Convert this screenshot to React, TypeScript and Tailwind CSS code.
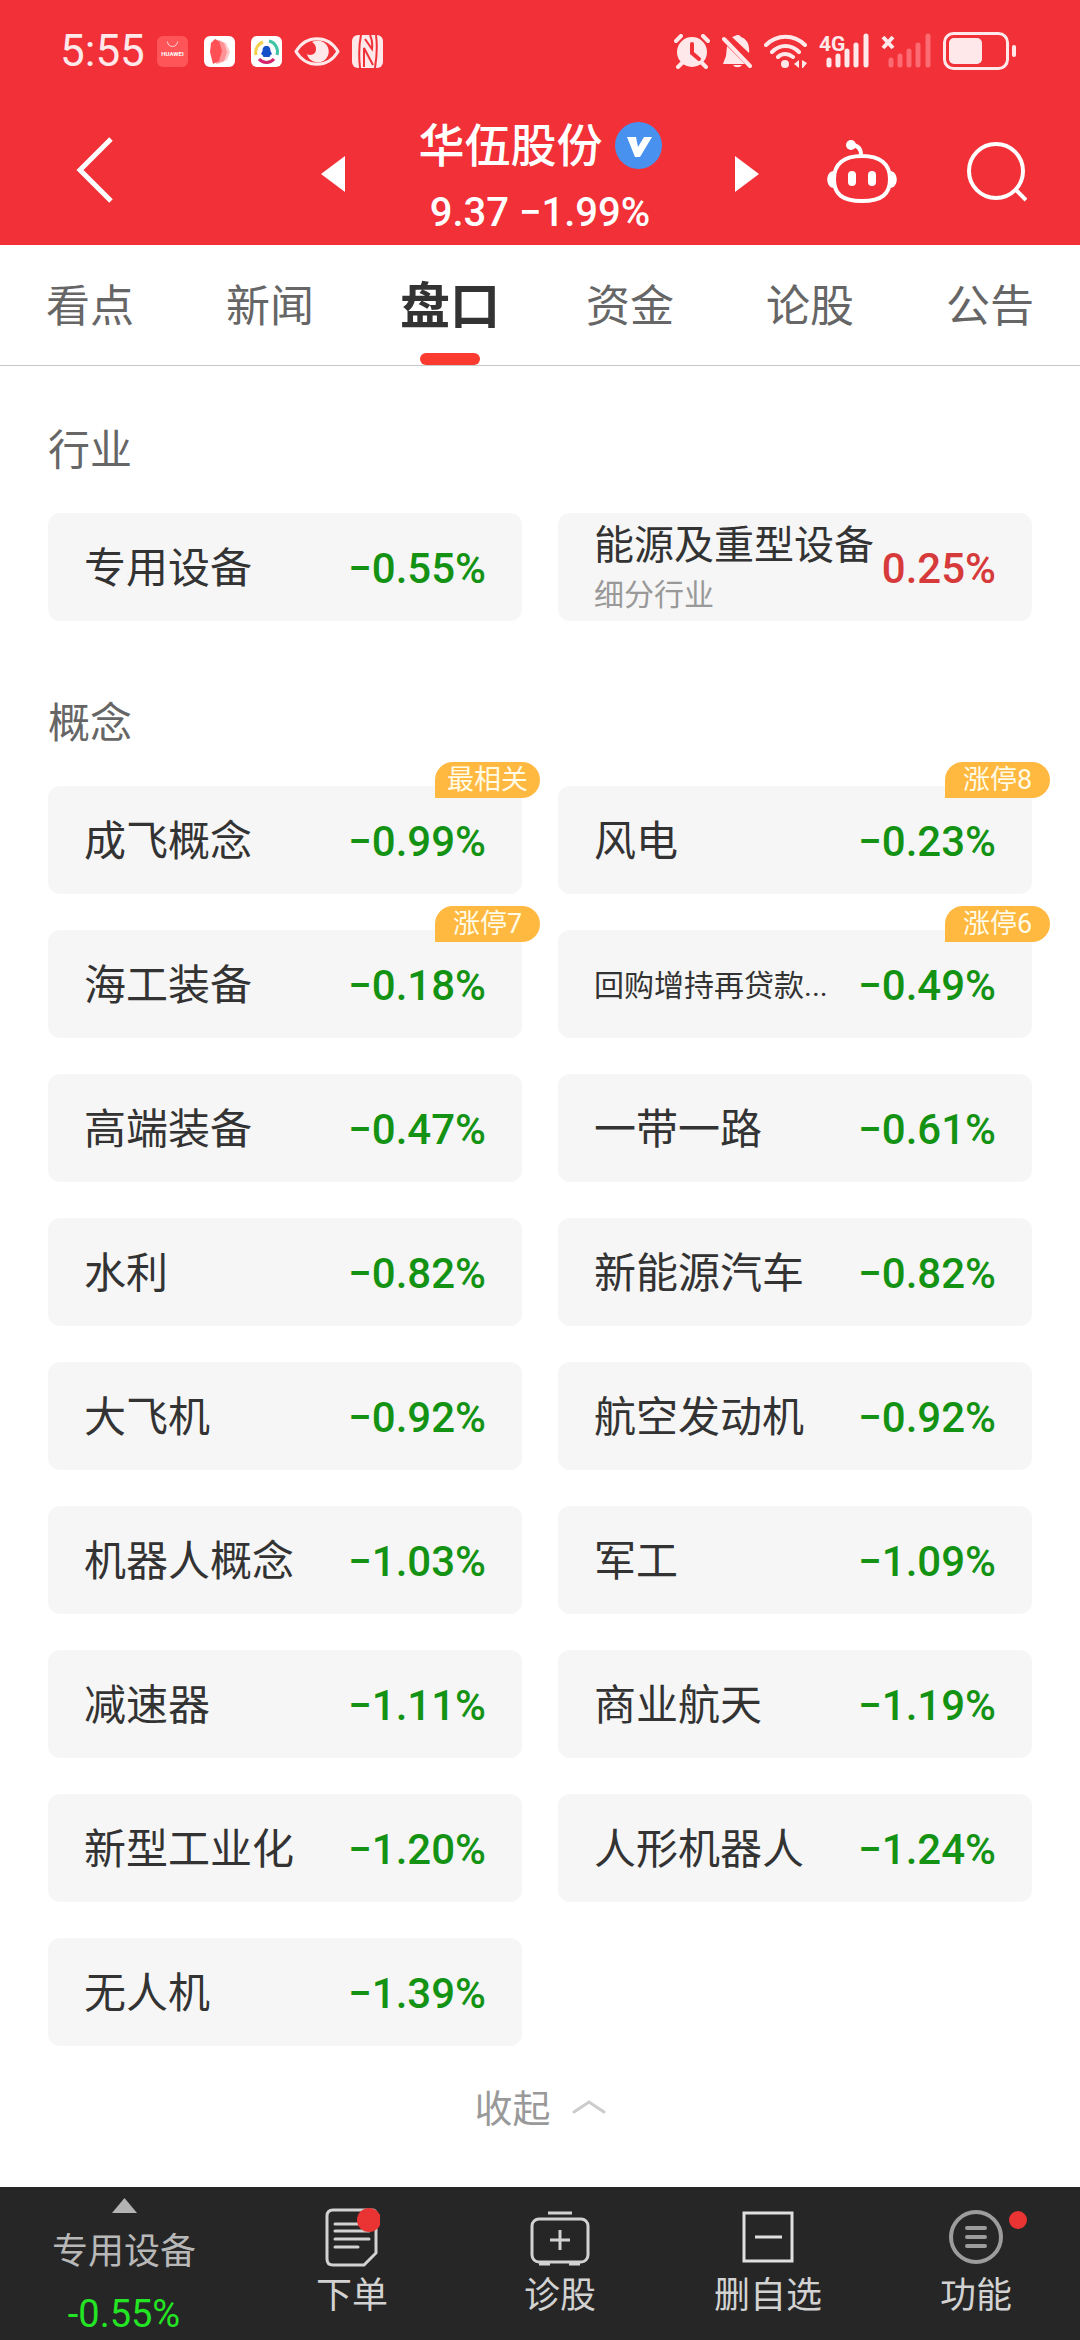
import React, { useState } from 'react';

interface Board {
  name: string;
  change: string;
  tag?: string;
  sub?: string;
  size?: 'md' | 'sm';
}

const tabs = ['看点', '新闻', '盘口', '资金', '论股', '公告'];

const industries: Board[] = [
  { name: '专用设备', change: '−0.55%' },
  { name: '能源及重型设备', change: '0.25%', sub: '细分行业', size: 'md' },
];

const concepts: Board[] = [
  { name: '成飞概念', change: '−0.99%', tag: '最相关' },
  { name: '风电', change: '−0.23%', tag: '涨停8' },
  { name: '海工装备', change: '−0.18%', tag: '涨停7' },
  { name: '回购增持再贷款...', change: '−0.49%', tag: '涨停6', size: 'sm' },
  { name: '高端装备', change: '−0.47%' },
  { name: '一带一路', change: '−0.61%' },
  { name: '水利', change: '−0.82%' },
  { name: '新能源汽车', change: '−0.82%' },
  { name: '大飞机', change: '−0.92%' },
  { name: '航空发动机', change: '−0.92%' },
  { name: '机器人概念', change: '−1.03%' },
  { name: '军工', change: '−1.09%' },
  { name: '减速器', change: '−1.11%' },
  { name: '商业航天', change: '−1.19%' },
  { name: '新型工业化', change: '−1.20%' },
  { name: '人形机器人', change: '−1.24%' },
  { name: '无人机', change: '−1.39%' },
];

const StatusBar: React.FC = () => (
  <div className="flex h-[102px] items-center justify-between pl-[60px] pr-[64px] text-[#ffe8e9]">
    <div className="flex items-center">
      <span className="mr-3 text-[44px] leading-[52px]">5:55</span>
      <svg className="mr-4 size-[31px]" viewBox="0 0 31 31">
        <rect width="31" height="31" rx="6" fill="#ff5458" />
        <path d="M10.500 5.500a5 5 0 0 0 10 0" fill="none" stroke="#ffd7d8" />
        <text x="15.500" y="20" fontSize="6" fontWeight="700" textAnchor="middle" fill="#fff">
          HUAWEI
        </text>
      </svg>
      <svg className="mr-4 size-[31px]" viewBox="0 0 31 31">
        <rect width="31" height="31" rx="6" fill="#fff" />
        <path d="M16 5l6 2 4 9-3 8-9 4z" fill="#ffc9cb" />
        <path d="M15 4l5 3 3 9-3 9-8 3z" fill="#ff9297" />
        <path d="M7 7l4-4 4 2 3 10-3 10-6 3-3-12z" fill="#ff5056" />
      </svg>
      <svg className="mr-3 size-[31px]" viewBox="0 0 31 31">
        <rect width="31" height="31" rx="6" fill="#fff" />
        <g fill="none" strokeWidth="2">
          <path d="M5 19A11 11 0 0 1 12 6" stroke="#f3d04a" strokeWidth="3" />
          <path d="M18 5a11 11 0 0 1 8 14" stroke="#3fc5a5" strokeWidth="3" />
          <path d="M8 23a10 10 0 0 0 15 0" stroke="#d3256b" strokeWidth="3" />
        </g>
        <path d="M15.500 10c3 0 4 2 4 5l1.500 3-1.500 1-1 2h-6l-1-2-1.500-1 1.500-3c0-3 1-5 4-5z" fill="#1450c8" />
      </svg>
      <svg className="mr-3 h-[31px] w-[46px]" viewBox="0 0 46 31">
        <path d="M2 15.500C12-1.500 34-1.500 44 15.500 34 32.500 12 32.500 2 15.500z" fill="none" stroke="currentColor" strokeWidth="3" />
        <path d="M18 6a11 11 0 1 1-5 12c3 2 9 1 9-5 0-3-1-5-4-7z" fill="currentColor" />
      </svg>
      <svg className="h-[33px] w-[31px]" viewBox="0 0 31 33">
        <rect width="31" height="33" rx="6" fill="currentColor" />
        <path d="M9 0Q6 14 8 33M12 32V13l9 17M13 4l7 10Q21 6 18 0M24 0q2 14-1 33" fill="none" stroke="#f13038" strokeWidth="2" />
      </svg>
    </div>

    <div className="flex items-center">
      <svg className="mr-3 h-[35px] w-[36px]" viewBox="0 0 36 35">
        <path d="M2 7l5-5M34 7l-5-5M8 29l-4 4M28 29l4 4" stroke="currentColor" strokeWidth="4" strokeLinecap="round" />
        <circle cx="18" cy="18" r="15" fill="currentColor" />
        <path d="M18 10v9l7 6" fill="none" stroke="#f13038" strokeWidth="4" strokeLinecap="round" />
      </svg>
      <svg className="mr-3 h-[35px] w-[30px]" viewBox="0 0 30 35">
        <path d="M10 3l3-1a4 4 0 0 1 6 1c6 2 9 8 8 16zM5 12l18 18H1l3-8zM11 31h9a5 4 0 0 1-9 0z" fill="currentColor" />
        <path d="M2 5l26 27" stroke="currentColor" strokeWidth="4" strokeLinecap="round" />
      </svg>
      <svg className="mr-3 h-[35px] w-[43px]" viewBox="0 0 43 35">
        <g fill="none" stroke="currentColor" strokeWidth="4" strokeLinecap="round">
          <path d="M2 11c11-11 28-11 39 0M8 18c8-8 19-8 27 0M14 23c4-4 10-4 15 0" />
        </g>
        <circle cx="21" cy="30" r="4" fill="currentColor" />
        <path d="M35 26v8l-5-4zM38 26l5 3-4 5h-1z" fill="currentColor" />
      </svg>
      <div className="relative mr-3 h-[36px] w-[50px]">
        <span className="absolute left-0 top-[-3px] text-[21px] font-bold leading-[28px]">4G</span>
        <svg className="h-[36px] w-[50px]" viewBox="0 0 50 36">
          <path d="M10 27v5M19 23v9M28 18v14M37 12v20M47 3v29" stroke="currentColor" strokeWidth="5" strokeLinecap="round" />
        </svg>
      </div>
      <svg className="mr-3 h-[36px] w-[50px]" viewBox="0 0 50 36">
        <path d="M2 4l10 11M12 4L2 15" stroke="currentColor" strokeWidth="4" />
        <path d="M10 27v5M19 23v9M28 18v14M37 12v20M47 3v29" stroke="#fb6b71" strokeWidth="5" strokeLinecap="round" />
      </svg>
      <svg className="h-[38px] w-[73px]" viewBox="0 0 73 38">
        <rect x="1.500" y="1.500" width="63" height="35" rx="9" fill="none" stroke="currentColor" strokeWidth="3" />
        <rect x="6" y="6" width="33" height="26" rx="5" fill="currentColor" />
        <rect x="69" y="13" width="4" height="12" rx="2" fill="currentColor" />
      </svg>
    </div>
  </div>
);

const Header: React.FC = () => (
  <header className="bg-[#f13038] text-white">
    <StatusBar />
    <div className="grid h-[143px] grid-cols-[1fr_438px_1fr] items-center">
      <button aria-label="返回" className="mb-2 ml-[76px] w-[38px]">
        <svg className="h-[66px] w-[38px]" viewBox="0 0 38 66">
          <path d="M35 2L4 33l31 31" fill="none" stroke="currentColor" strokeWidth="5" />
        </svg>
      </button>
      <div className="flex items-center justify-between">
        <button aria-label="上一只">
          <svg className="h-[36px] w-[24px]" viewBox="0 0 24 36">
            <path d="M24 0v36L0 18z" fill="currentColor" />
          </svg>
        </button>
        <div className="flex flex-col items-center pt-2">
          <h1 className="flex items-center gap-3 text-[46px] font-medium leading-[66px]">
            华伍股份
            <svg className="size-[47px]" viewBox="0 0 47 47">
              <circle cx="23.500" cy="23.500" r="23.500" fill="#4891ee" />
              <path d="M12 15h9l2 10 6-10h8L25 35h-5z" fill="#fff" />
            </svg>
          </h1>
          <p className="mt-1 text-[40px] font-medium leading-[60px]">9.37 −1.99%</p>
        </div>
        <button aria-label="下一只">
          <svg className="h-[36px] w-[24px]" viewBox="0 0 24 36">
            <path d="M0 0v36l24-18z" fill="currentColor" />
          </svg>
        </button>
      </div>
      <div className="mb-1 flex items-center justify-end gap-[70px] pr-[53px]">
        <button aria-label="智能助手">
          <svg className="h-[64px] w-[70px]" viewBox="0 0 70 64">
            <path d="M24 5c6 0 10 3 10 10" fill="none" stroke="currentColor" strokeWidth="4" />
            <circle cx="24" cy="5" r="5" fill="currentColor" />
            <path d="M35 16c18 0 28 8 28 23S55 61 35 61 7 54 7 39s10-23 28-23z" fill="none" stroke="currentColor" strokeWidth="4" />
            <path d="M7 31c-9 0-9 17 0 17zM63 31c9 0 9 17 0 17z" fill="currentColor" />
            <rect x="21" y="31" width="8" height="15" rx="4" fill="currentColor" />
            <rect x="41" y="31" width="8" height="15" rx="4" fill="currentColor" />
          </svg>
        </button>
        <button aria-label="搜索">
          <svg className="h-[60px] w-[60px]" viewBox="0 0 60 60">
            <circle cx="29" cy="29" r="27" fill="none" stroke="currentColor" strokeWidth="4" />
            <path d="M48 47l11 11" stroke="currentColor" strokeWidth="4" />
          </svg>
        </button>
      </div>
    </div>
  </header>
);

const BoardCard: React.FC<{ board: Board }> = ({ board }) => {
  const nameSize =
    board.size === 'sm'
      ? 'text-[30px]'
      : board.size === 'md'
        ? 'text-[40px]'
        : 'text-[42px]';
  const color = board.change.startsWith('−') ? 'text-[#149214]' : 'text-[#d73a3a]';

  return (
    <li>
      <button className="relative flex h-[108px] w-full items-center justify-between whitespace-nowrap rounded-xl bg-[#f6f6f6] px-9 pt-1 text-left">
        <span className="flex flex-col">
          <span className={`${nameSize} leading-[52px] text-[#333]`}>{board.name}</span>
          {board.sub && (
            <span className="text-[30px] leading-[46px] text-[#999]">{board.sub}</span>
          )}
        </span>
        <span className={`text-[42px] font-medium leading-[52px] ${color}`}>{board.change}</span>
        {board.tag && (
          <span className="absolute -right-[18px] -top-6 h-9 w-[105px] rounded-[18px] rounded-bl-none bg-[#ffb840] text-center text-[27px] leading-[36px] text-[#fffbe6]">
            {board.tag}
          </span>
        )}
      </button>
    </li>
  );
};

const BoardSection: React.FC<{ title: string; boards: Board[] }> = ({ title, boards }) => (
  <section className="px-12">
    <h2 className="text-[42px] leading-[60px] text-[#666]">{title}</h2>
    <ul className="mt-8 grid grid-cols-2 gap-9">
      {boards.map((board) => (
        <BoardCard key={board.name} board={board} />
      ))}
    </ul>
  </section>
);

const BottomBar: React.FC = () => (
  <footer className="grid h-[153px] grid-cols-[248px_repeat(4,1fr)] bg-[#262626] text-[36px] leading-[54px] text-[#d2d2d2]">
    <button className="flex flex-col items-center pt-[11px] text-[#b8b8b8]">
      <svg className="h-[15px] w-[25px]" viewBox="0 0 25 15">
        <path d="M12.500 0L25 15H0z" fill="#b3b3b3" />
      </svg>
      <span className="mt-3">专用设备</span>
      <span className="mt-2 text-[38px] text-[#24e524]">-0.55%</span>
    </button>
    <button className="flex flex-col items-center pt-5">
      <svg className="h-[62px] w-[56px]" viewBox="0 0 56 62">
        <path d="M9 3h39q4 0 4 4v39L40 58H9q-6 0-6-6V9q0-6 6-6z" fill="none" stroke="currentColor" strokeWidth="3" />
        <path d="M11 17h34M11 24h34M11 32h34M11 40h23" stroke="currentColor" strokeWidth="3" strokeLinecap="round" />
        <circle cx="45" cy="13" r="12" fill="#ea3434" />
      </svg>
      <span>下单</span>
    </button>
    <button className="flex flex-col items-center pt-5">
      <svg className="h-[62px] w-[60px]" viewBox="0 0 60 62">
        <rect x="2" y="12" width="56" height="43" rx="7" fill="none" stroke="currentColor" strokeWidth="3" />
        <path d="M18 6h24M30 23v20M20 33h20M9 57h11M39 57h11" stroke="currentColor" strokeWidth="3" />
      </svg>
      <span>诊股</span>
    </button>
    <button className="flex flex-col items-center pt-5">
      <svg className="h-[62px] w-[52px]" viewBox="0 0 52 62">
        <path d="M2 6h48v48H2zM13 30h27" fill="none" stroke="#e0e0e0" strokeWidth="3" />
      </svg>
      <span>删自选</span>
    </button>
    <button className="relative flex flex-col items-center pt-5">
      <svg className="h-[62px] w-[54px]" viewBox="0 0 54 62">
        <circle cx="27" cy="30" r="25" fill="none" stroke="#9c9c9c" strokeWidth="4" />
        <path d="M18 21h18M18 30h18M18 39h18" stroke="#9c9c9c" strokeWidth="4" strokeLinecap="round" />
      </svg>
      <span>功能</span>
      <span className="absolute right-[53px] top-6 size-[18px] rounded-full bg-[#ea3434]" />
    </button>
  </footer>
);

export default function App() {
  const [activeTab, setActiveTab] = useState('盘口');

  return (
    <div className="flex min-h-screen flex-col bg-white font-[Roboto,'Noto_Sans_CJK_SC',sans-serif]">
      <Header />

      {/* Tabs */}
      <nav className="grid h-[121px] grid-cols-6 border-b border-[#c8c8c8]">
        {tabs.map((tab) => (
          <button
            key={tab}
            onClick={() => setActiveTab(tab)}
            className={`relative pt-1 leading-[116px] ${
              tab === activeTab ? 'text-[50px] font-bold text-[#333]' : 'text-[44px] text-[#666]'
            }`}
          >
            {tab}
            {tab === activeTab && (
              <span className="absolute bottom-0 left-1/2 h-3 w-[60px] -translate-x-1/2 rounded-full bg-[#fb3a30]" />
            )}
          </button>
        ))}
      </nav>

      {/* Boards */}
      <main className="flex flex-1 flex-col gap-[73px] pt-[55px]">
        <BoardSection title="行业" boards={industries} />
        <BoardSection title="概念" boards={concepts} />
      </main>
      <button className="flex h-[141px] items-start justify-center gap-[21px] pt-9 text-[38px] leading-[54px] text-[#999]">
        收起
        <svg className="mt-[18px] h-[14px] w-[34px]" viewBox="0 0 34 14">
          <path d="M2 12L17 2l15 10" fill="none" stroke="#ccc" strokeWidth="3" strokeLinecap="round" />
        </svg>
      </button>

      <BottomBar />
    </div>
  );
}
